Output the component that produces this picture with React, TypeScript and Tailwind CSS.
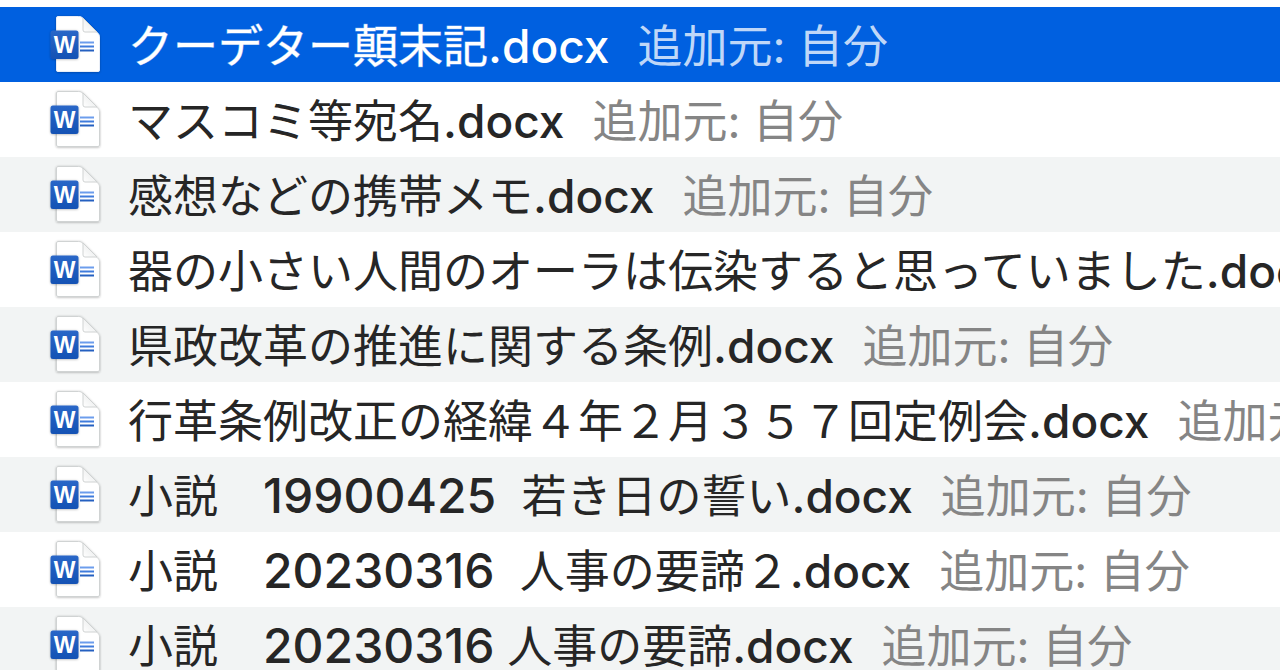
type FileEntry = { name: string; selected?: boolean };

const files: FileEntry[] = [
  { name: "クーデター顛末記.docx", selected: true },
  { name: "マスコミ等宛名.docx" },
  { name: "感想などの携帯メモ.docx" },
  { name: "器の小さい人間のオーラは伝染すると思っていました.docx" },
  { name: "県政改革の推進に関する条例.docx" },
  { name: "行革条例改正の経緯４年２月３５７回定例会.docx" },
  { name: "小説　19900425  若き日の誓い.docx" },
  { name: "小説　20230316  人事の要諦２.docx" },
  { name: "小説　20230316 人事の要諦.docx" },
];

function WordIcon({ selected }: { selected?: boolean }) {
  return (
    <svg viewBox="0 0 56 64" className="h-16 w-14 shrink-0" aria-hidden="true">
      <defs>
        <linearGradient id="fold" x1="0" y1="1" x2="1" y2="0">
          <stop offset="0" stopColor="#ffffff" />
          <stop offset="1" stopColor="#e4e6e6" />
        </linearGradient>
        <linearGradient id="badge" x1="0" y1="0" x2="0" y2="1">
          <stop offset="0" stopColor="#2a67c8" />
          <stop offset="1" stopColor="#1552b4" />
        </linearGradient>
        <filter id="shade" x="-20%" y="-20%" width="140%" height="140%">
          <feDropShadow dx="0" dy="0.5" stdDeviation="0.9" floodColor="#000" floodOpacity="0.3" />
        </filter>
      </defs>
      <path
        d="M10 3.500h20.500c2 0 3.200.5 4.500 1.800l14.500 14.500c1.200 1.200 2 2.200 2 4V57a1.500 1.500 0 0 1-1.500 1.500H10A1.500 1.500 0 0 1 8.500 57V5A1.500 1.500 0 0 1 10 3.500Z"
        fill="#fff"
        stroke={selected ? "#e9eef7" : "#d0d3d3"}
        strokeWidth="1"
        filter="url(#shade)"
      />
      <path d="M35 5v12a2 2 0 0 0 2 2h12Z" fill="url(#fold)" stroke="#cfd2d2" strokeWidth="1" />
      <g strokeWidth="2">
        <path d="M32 29.500h14" stroke="#6c9dec" />
        <path d="M32 33.500h14" stroke="#3f7bdc" />
        <path d="M32 37.500h14" stroke="#2560c0" />
      </g>
      <rect x="2.500" y="17.500" width="28" height="28.500" rx="2.500" fill="url(#badge)" filter="url(#shade)" />
      <text
        x="16.500"
        y="40"
        textAnchor="middle"
        className="fill-white font-['Liberation_Sans',sans-serif] text-[23px] font-bold"
      >
        W
      </text>
    </svg>
  );
}

function FileName({ name, selected }: FileEntry) {
  const runs = name.split(/(\d+|\.docx)/).filter(Boolean);
  return (
    <span>
      {runs.map((run, index) => {
        if (/^[0-9]/.test(run)) {
          return (
            <span key={index} className="text-[48px] leading-none font-medium">
              {run}
            </span>
          );
        }
        if (run === ".docx") {
          return (
            <span key={index} className="text-[46px] leading-none font-medium">
              {run}
            </span>
          );
        }
        return (
          <span key={index} className={selected ? "[-webkit-text-stroke:1px_#ffffff70]" : ""}>
            {run}
          </span>
        );
      })}
    </span>
  );
}

function FileRow({ name, selected }: FileEntry) {
  return (
    <li
      className={
        selected
          ? "flex h-[75px] items-center gap-6 bg-[#0060e0] pl-12 text-white"
          : "flex h-[75px] items-center gap-6 bg-white pl-12 text-[#262626] odd:bg-[#f2f4f4]"
      }
    >
      <WordIcon selected={selected} />
      <p className="flex gap-7 pt-1 whitespace-pre">
        <FileName name={name} selected={selected} />
        <span className={selected ? "text-[#bfd7f8]" : "text-[#858585]"}>追加元: 自分</span>
      </p>
    </li>
  );
}

export default function App() {
  return (
    <main className="h-screen overflow-hidden bg-white pt-[7px]">
      <ul className="font-['Inter','Noto_Sans_CJK_JP',sans-serif] text-[45px] leading-[60px]">
        {files.map((file) => (
          <FileRow key={file.name} {...file} />
        ))}
      </ul>
    </main>
  );
}
